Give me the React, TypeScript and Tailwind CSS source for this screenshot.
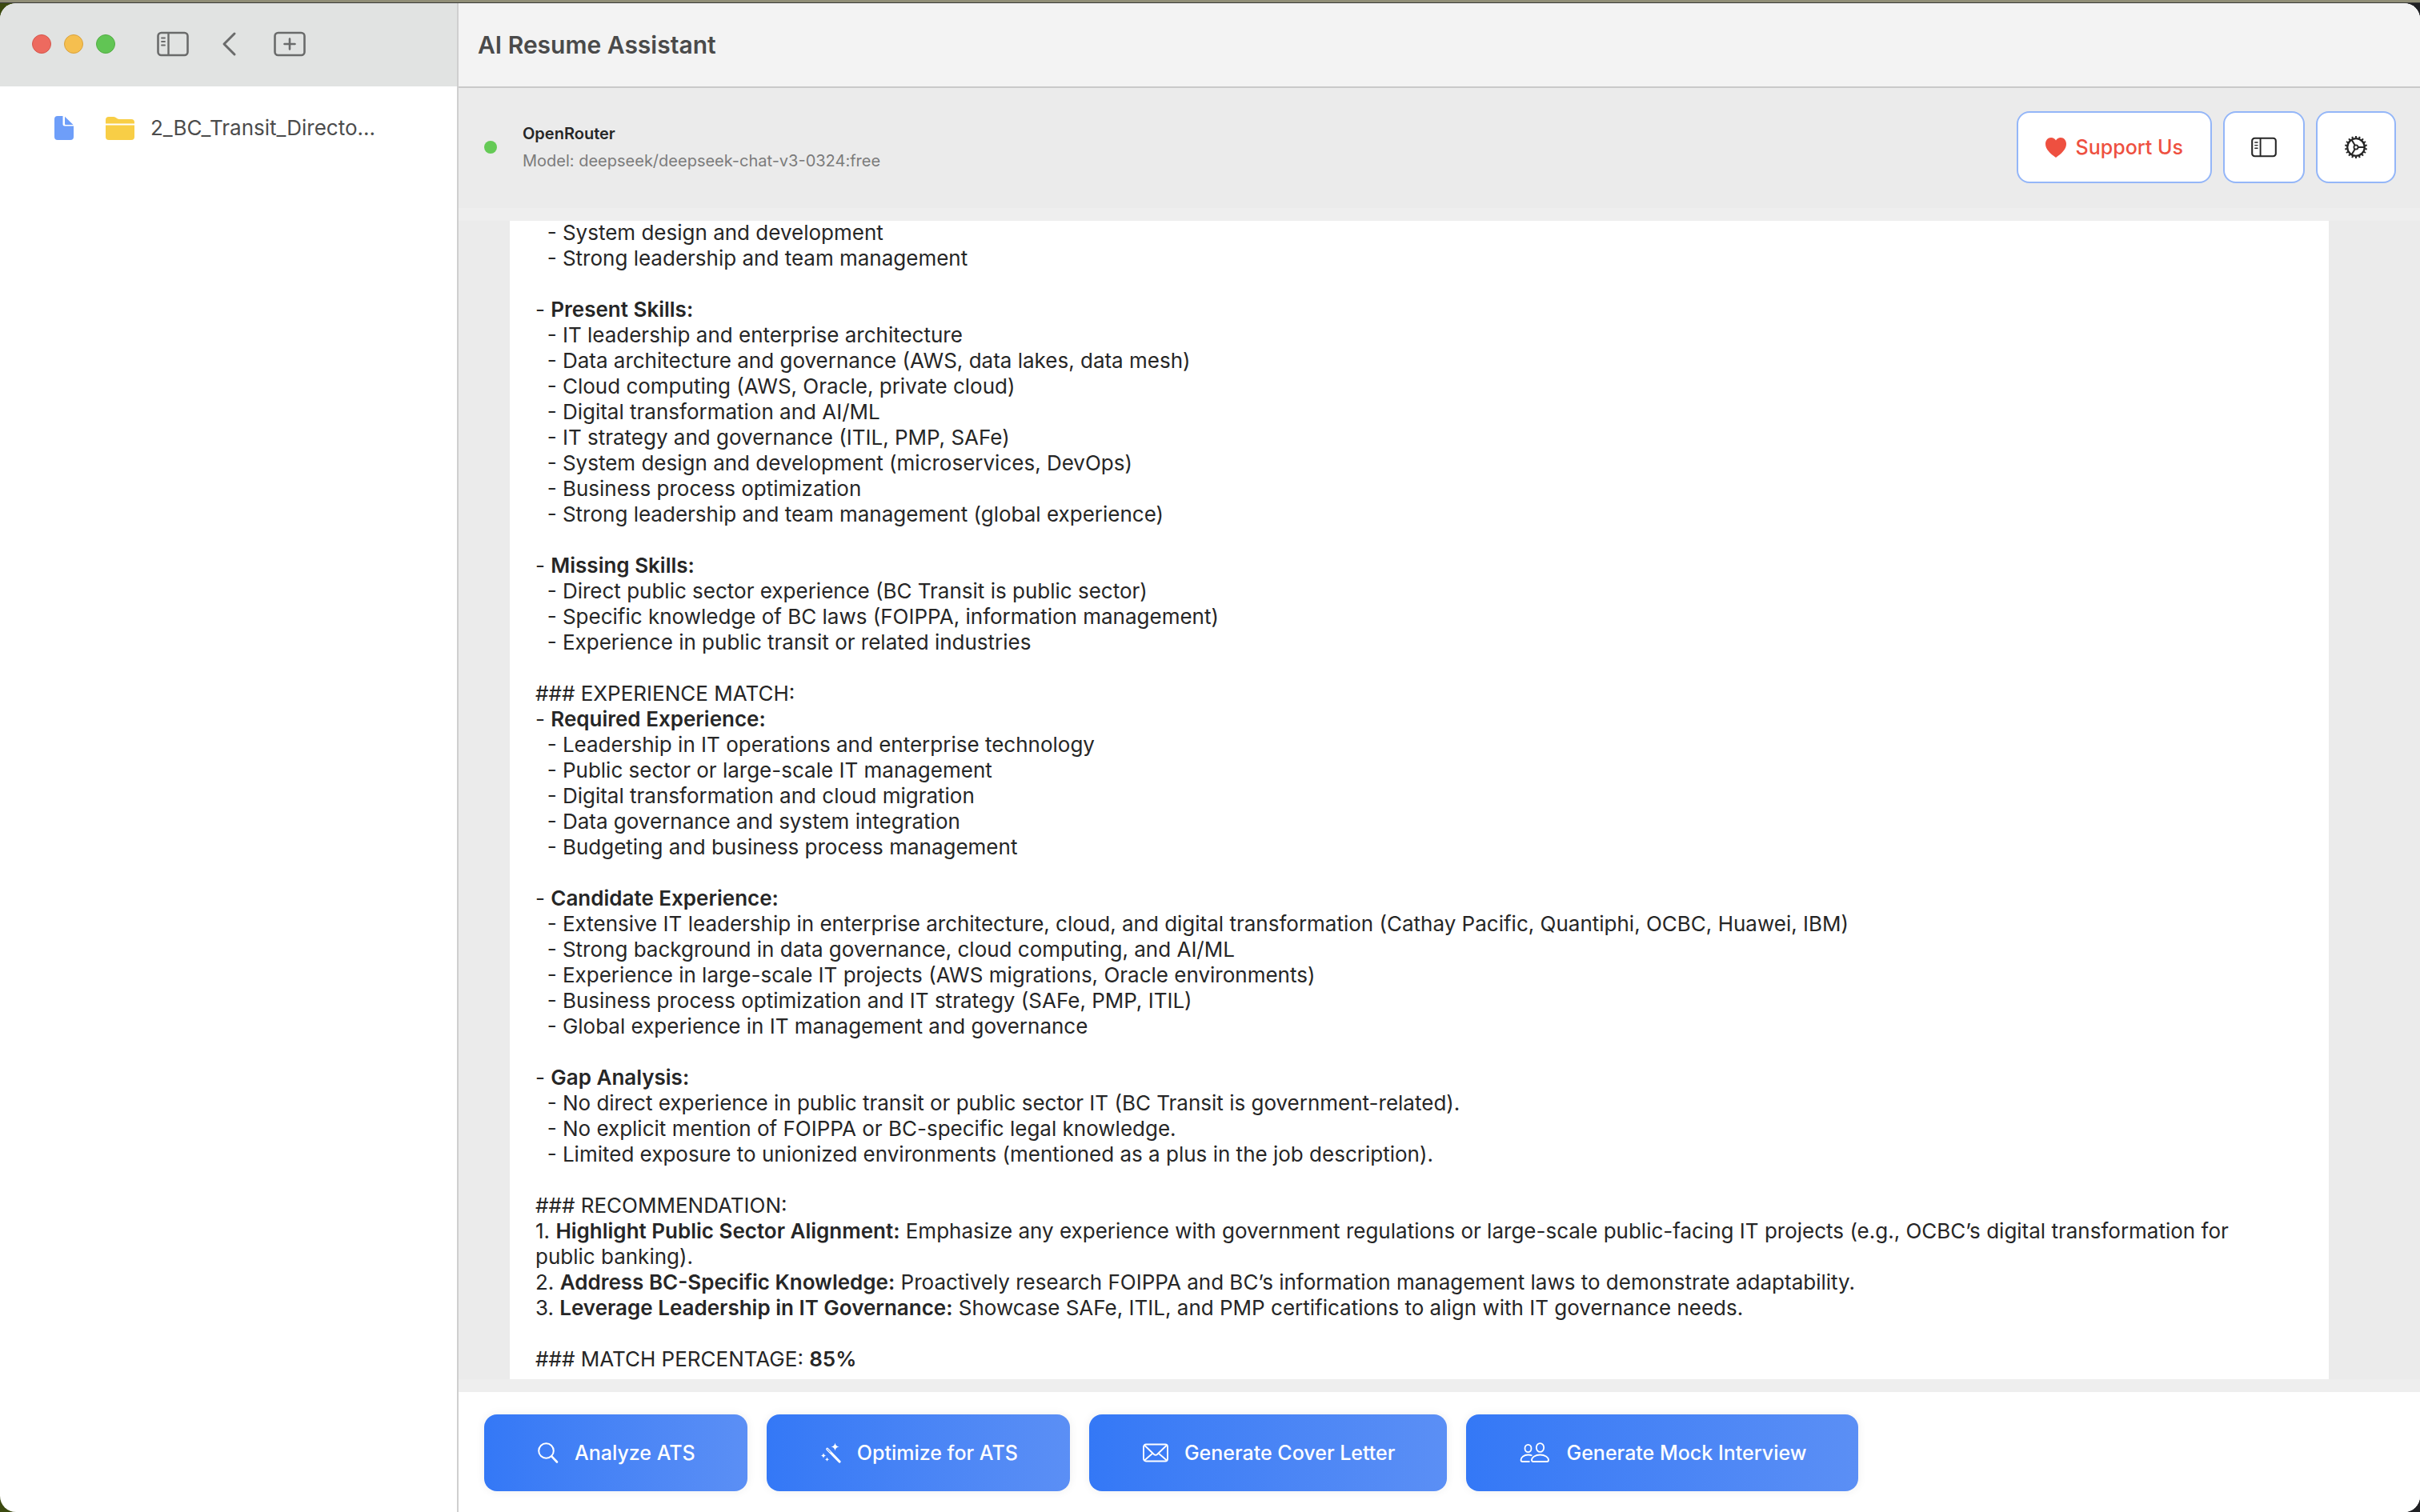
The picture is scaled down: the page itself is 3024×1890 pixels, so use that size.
import type { ReactNode } from "react";

type Line = { lead?: string; bold?: string; rest?: string };

const lines: Line[] = [
  { rest: "  - System design and development" },
  { rest: "  - Strong leadership and team management" },
  {},
  { lead: "- ", bold: "Present Skills:" },
  { rest: "  - IT leadership and enterprise architecture" },
  { rest: "  - Data architecture and governance (AWS, data lakes, data mesh)" },
  { rest: "  - Cloud computing (AWS, Oracle, private cloud)" },
  { rest: "  - Digital transformation and AI/ML" },
  { rest: "  - IT strategy and governance (ITIL, PMP, SAFe)" },
  { rest: "  - System design and development (microservices, DevOps)" },
  { rest: "  - Business process optimization" },
  { rest: "  - Strong leadership and team management (global experience)" },
  {},
  { lead: "- ", bold: "Missing Skills:" },
  { rest: "  - Direct public sector experience (BC Transit is public sector)" },
  { rest: "  - Specific knowledge of BC laws (FOIPPA, information management)" },
  { rest: "  - Experience in public transit or related industries" },
  {},
  { rest: "### EXPERIENCE MATCH:" },
  { lead: "- ", bold: "Required Experience:" },
  { rest: "  - Leadership in IT operations and enterprise technology" },
  { rest: "  - Public sector or large-scale IT management" },
  { rest: "  - Digital transformation and cloud migration" },
  { rest: "  - Data governance and system integration" },
  { rest: "  - Budgeting and business process management" },
  {},
  { lead: "- ", bold: "Candidate Experience:" },
  { rest: "  - Extensive IT leadership in enterprise architecture, cloud, and digital transformation (Cathay Pacific, Quantiphi, OCBC, Huawei, IBM)" },
  { rest: "  - Strong background in data governance, cloud computing, and AI/ML" },
  { rest: "  - Experience in large-scale IT projects (AWS migrations, Oracle environments)" },
  { rest: "  - Business process optimization and IT strategy (SAFe, PMP, ITIL)" },
  { rest: "  - Global experience in IT management and governance" },
  {},
  { lead: "- ", bold: "Gap Analysis:" },
  { rest: "  - No direct experience in public transit or public sector IT (BC Transit is government-related)." },
  { rest: "  - No explicit mention of FOIPPA or BC-specific legal knowledge." },
  { rest: "  - Limited exposure to unionized environments (mentioned as a plus in the job description)." },
  {},
  { rest: "### RECOMMENDATION:" },
  { lead: "1. ", bold: "Highlight Public Sector Alignment:", rest: " Emphasize any experience with government regulations or large-scale public-facing IT projects (e.g., OCBC’s digital transformation for public banking)." },
  { lead: "2. ", bold: "Address BC-Specific Knowledge:", rest: " Proactively research FOIPPA and BC’s information management laws to demonstrate adaptability." },
  { lead: "3. ", bold: "Leverage Leadership in IT Governance:", rest: " Showcase SAFe, ITIL, and PMP certifications to align with IT governance needs." },
  {},
  { lead: "### MATCH PERCENTAGE: ", bold: "85%" },
];

function SidebarIcon({ className }: { className: string }) {
  return (
    <svg viewBox="0 0 40 32" className={className} fill="none" stroke="currentColor" strokeLinecap="round" aria-hidden="true">
      <rect x="1.5" y="2" width="37" height="28" rx="4" strokeWidth="2.6" />
      <path d="M14.5 2v28" strokeWidth="2.4" strokeLinecap="butt" />
      <path d="M6 8.5h4M6 13h4M6 17.5h4" strokeWidth="1.8" />
    </svg>
  );
}

function GearIcon() {
  const teeth = Array.from({ length: 18 }, (_, i) => i * 20 + 10);
  return (
    <svg viewBox="-16 -16 32 32" className="size-8" fill="none" stroke="currentColor" aria-hidden="true">
      <circle r="10.8" strokeWidth="2.3" />
      <circle r="2.6" strokeWidth="1.8" />
      {teeth.map((a) => (
        <path key={a} d="M11.5 0H14" strokeWidth="2" transform={`rotate(${a})`} />
      ))}
      {[0, 120, 240].map((a) => (
        <path key={a} d="M2.8 0H11" strokeWidth="2" transform={`rotate(${a})`} />
      ))}
    </svg>
  );
}

function ToolButton({ label, children }: { label: string; children: ReactNode }) {
  return (
    <button type="button" aria-label={label} className="flex h-8 items-center justify-center">
      {children}
    </button>
  );
}

function ActionButton({ icon, children }: { icon: ReactNode; children: ReactNode }) {
  return (
    <button
      type="button"
      className="flex h-24 items-center gap-5 rounded-2xl bg-linear-to-r from-[#3478f6] to-[#5b8ff5] px-[65px] text-[25px] leading-8 font-medium whitespace-nowrap text-white shadow-[0_0_12px_rgba(0,0,0,0.07)]"
    >
      {icon}
      {children}
    </button>
  );
}

export default function App() {
  return (
    <div className="flex h-screen flex-col bg-linear-to-r from-[#3c4a10] via-[#2a2a26] to-[#202124] font-['Inter',sans-serif] text-[#262626]">
      <div className="h-1 shrink-0 border-b border-[#3a3a38] bg-[#8f8d76]" />
      <div className="flex min-h-0 grow overflow-hidden rounded-[20px] bg-white">
        <aside className="flex w-[573px] shrink-0 flex-col border-r-2 border-[#cfcfcf]">
          <div className="flex h-26 shrink-0 items-center bg-[#e1e3e2] pb-0.5 pl-10 text-[#6a6b6b]">
            <div className="flex gap-4">
              <button type="button" aria-label="Close" className="size-6 rounded-full border border-[#d5574d] bg-[#ed6a5f]" />
              <button type="button" aria-label="Minimize" className="size-6 rounded-full border border-[#d9a23c] bg-[#f5bf4f]" />
              <button type="button" aria-label="Zoom" className="size-6 rounded-full border border-[#52ad43] bg-[#61c554]" />
            </div>
            <div className="flex items-center gap-10 pl-13">
              <ToolButton label="Toggle sidebar">
                <SidebarIcon className="h-8 w-10" />
              </ToolButton>
              <ToolButton label="Back">
                <svg viewBox="0 0 26 32" className="h-8 w-[26px]" fill="none" stroke="currentColor" strokeWidth="3" strokeLinecap="round" strokeLinejoin="round" aria-hidden="true">
                  <path d="M17 3 4 16l13 13" />
                </svg>
              </ToolButton>
              <ToolButton label="New">
                <svg viewBox="0 0 40 32" className="h-8 w-10" fill="none" stroke="currentColor" strokeWidth="2.6" strokeLinecap="round" aria-hidden="true">
                  <rect x="1.5" y="2" width="37" height="28" rx="4" />
                  <path d="M20 9.5v13M13.500 16h13" />
                </svg>
              </ToolButton>
            </div>
          </div>
          <nav className="flex items-center pt-9 pl-[68px] text-[#4c4c4c]">
            <svg viewBox="0 0 24 30" className="h-[30px] w-6" fill="#6e9ef9" aria-hidden="true">
              <path d="M4 0h6.500v10.500a2 2 0 0 0 2 2H24V26a4 4 0 0 1-4 4H4a4 4 0 0 1-4-4V4a4 4 0 0 1 4-4z" />
              <path d="M13 .8 23.500 11H14a1 1 0 0 1-1-1z" />
            </svg>
            <svg viewBox="0 0 36 30" className="ml-10 h-[30px] w-9" fill="#f8ce46" aria-hidden="true">
              <path d="M0 9.500V5a4 4 0 0 1 4-4h6c3 0 4 3 7 3h15a4 4 0 0 1 4 4v1.500z" />
              <path d="M0 11.500h36V26a4 4 0 0 1-4 4H4a4 4 0 0 1-4-4z" />
            </svg>
            <a href="#document" className="ml-5 text-[26px] leading-8 whitespace-nowrap">
              2_BC_Transit_Directo...
            </a>
          </nav>
        </aside>

        <main className="flex min-w-0 grow flex-col bg-[#eeeeee]">
          <header className="flex h-[106px] shrink-0 items-center border-b-2 border-[#c9c9c9] bg-[#f3f3f3] px-6">
            <h1 className="text-[30px] leading-9 font-semibold text-[#4a4a4a]">AI Resume Assistant</h1>
          </header>

          <section className="flex h-[150px] shrink-0 items-center bg-[#ebebeb] pr-[30px] pb-0.5 pl-8">
            <span className="size-4 rounded-full bg-[#65ca56]" />
            <div className="ml-8 flex grow flex-col gap-1.5">
              <h2 className="text-[20px] leading-7 font-semibold">OpenRouter</h2>
              <p className="text-[20px] leading-7 text-[#7b7b7b]">Model: deepseek/deepseek-chat-v3-0324:free</p>
            </div>
            <div className="flex gap-3.5">
              <button type="button" className="flex h-[90px] items-center gap-3 rounded-2xl border-2 border-[#94b6f8] bg-white px-[34px] text-[25px] leading-8 font-medium text-[#ee5040]">
                <svg viewBox="0 0 26 25" className="h-[25px] w-[26px]" fill="currentColor" aria-hidden="true">
                  <path d="M13 25C6 20 0 14.500 0 8 0 3.500 3 0 7 0c2.600 0 4.700 1.300 6 3.500C14.300 1.300 16.400 0 19 0c4 0 7 3.500 7 8 0 6.500-6 12-13 17z" />
                </svg>
                Support Us
              </button>
              <button type="button" aria-label="Toggle panel" className="flex h-[90px] items-center rounded-2xl border-2 border-[#94b6f8] bg-white px-[33px]">
                <SidebarIcon className="h-[26px] w-8" />
              </button>
              <button type="button" aria-label="Settings" className="flex h-[90px] items-center rounded-2xl border-2 border-[#94b6f8] bg-white px-8">
                <GearIcon />
              </button>
            </div>
          </section>

          <section className="my-4 flex min-h-0 grow bg-[#ebebeb] pr-[114px] pl-16">
            <article className="flex min-w-0 grow flex-col justify-end overflow-hidden bg-white pr-14 pb-[9px] pl-8 text-[26px] leading-8">
              {lines.map((line, i) => (
                <p key={i} className="min-h-8 shrink-0 whitespace-pre-wrap">
                  {line.lead}
                  {line.bold && <strong className="font-semibold">{line.bold}</strong>}
                  {line.rest}
                </p>
              ))}
            </article>
          </section>

          <footer className="flex shrink-0 gap-6 bg-white px-8 pt-7 pb-[26px]">
            <ActionButton
              icon={
                <svg viewBox="0 0 28 28" className="size-7" fill="none" stroke="currentColor" strokeWidth="2" strokeLinecap="round" aria-hidden="true">
                  <circle cx="12.500" cy="11.500" r="9.300" />
                  <path d="M19.300 18.300 26 25.500" strokeWidth="2.600" />
                </svg>
              }
            >
              Analyze ATS
            </ActionButton>
            <ActionButton
              icon={
                <svg viewBox="0 0 28 28" className="size-7" fill="currentColor" aria-hidden="true">
                  <path d="M10.800 9.300 26 25" stroke="currentColor" strokeWidth="3.200" strokeLinecap="round" />
                  <path d="M10.900 9.400 14.500 13.100" stroke="#3f80f6" strokeWidth="1" strokeLinecap="round" />
                  <path d="M20.500 1.500q.6 4.400 5 5-4.400.6-5 5-.6-4.400-5-5 4.400-.6 5-5z" />
                  <path d="M6 14q.4 3.100 3.500 3.500-3.100.4-3.500 3.500-.4-3.100-3.500-3.500 3.100-.4 3.500-3.500zM10.500 19.800q.3 2.200 2.500 2.500-2.200.3-2.500 2.500-.3-2.200-2.500-2.500 2.200-.3 2.500-2.500z" />
                </svg>
              }
            >
              Optimize for ATS
            </ActionButton>
            <ActionButton
              icon={
                <svg viewBox="-2 0 34 24" className="h-6 w-[34px]" fill="none" stroke="currentColor" strokeWidth="1.800" strokeLinejoin="round" aria-hidden="true">
                  <rect x="1" y="1.500" width="30" height="21" rx="3" />
                  <path d="m2 2.500 12 11.500q2 1.600 4 0L30 2.500M2 21.500l10.500-9M30 21.500l-10.500-9" />
                </svg>
              }
            >
              Generate Cover Letter
            </ActionButton>
            <ActionButton
              icon={
                <svg viewBox="-2 0 40 28" className="h-7 w-10" fill="none" stroke="currentColor" strokeWidth="1.800" strokeLinejoin="round" aria-hidden="true">
                  <ellipse cx="25.500" cy="7.500" rx="4.700" ry="5.400" />
                  <ellipse cx="10.500" cy="8.500" rx="4" ry="4.700" />
                  <path d="M17 25q-2 0-2-2c0-3.500 4.500-6.500 10.500-6.500s10.500 3 10.500 6.500q0 2-2 2z" />
                  <path d="M12.500 25H3.500q-2 0-2-2c0-3.500 4-6.500 9-6.500 2 0 3.600.4 5 1" />
                </svg>
              }
            >
              Generate Mock Interview
            </ActionButton>
          </footer>
        </main>
      </div>
    </div>
  );
}
